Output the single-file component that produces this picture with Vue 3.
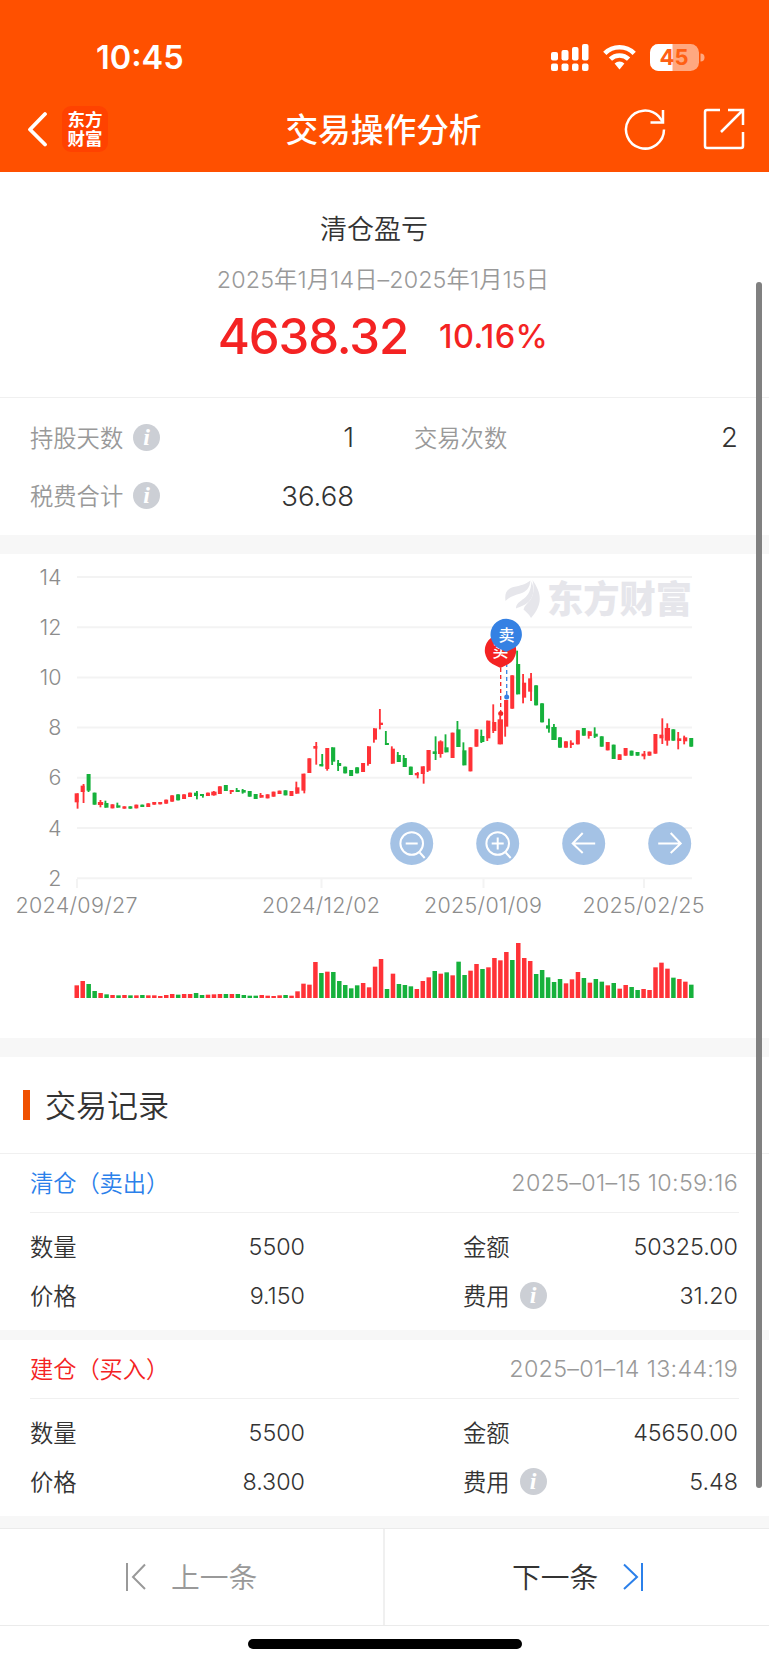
<template>
  <div class="page">
    <header class="header">
      <div class="status-bar">
        <span class="clock">10:45</span>
        <svg class="status-icons" width="156" height="30" viewBox="0 0 156 30">
          <g fill="#fff">
            <rect x="1" y="10" width="7" height="8.5" rx="2" />
            <rect x="11.5" y="8" width="7" height="10.5" rx="2" />
            <rect x="22" y="5" width="6.5" height="13.5" rx="2" />
            <rect x="32" y="2" width="6.5" height="16.5" rx="2" />
            <rect x="1" y="21.5" width="7" height="7.5" rx="2" />
            <rect x="11.5" y="21.5" width="7" height="7.5" rx="2" />
            <rect x="22" y="21.5" width="6.5" height="7.5" rx="2" />
            <rect x="32" y="21.5" width="6.5" height="7.5" rx="2" />
          </g>
          <g fill="none" stroke="#fff" stroke-width="4.6">
            <path d="M54.8 11.4a20.8 20.8 0 0 1 29.4 0" />
            <path d="M60.4 17.2a12.9 12.9 0 0 1 18.2 0" />
          </g>
          <path d="M64.6 21.4a7 7 0 0 1 9.8 0L69.5 27.5z" fill="#fff" />
          <rect x="100" y="2" width="49" height="27" rx="8.5" fill="#ffa880" />
          <path d="M122.500 2h-14a8.500 8.500 0 0 0-8.500 8.500v10a8.500 8.500 0 0 0 8.500 8.500h14z" fill="#fff" />
          <path d="M150.500 11.500a4 4 0 0 1 0 8z" fill="#ffa880" />
          <text class="battery-text" x="124" y="23" text-anchor="middle" textLength="29">45</text>
        </svg>
      </div>
      <div class="nav-bar">
        <div class="nav-left">
          <svg width="22" height="36" viewBox="0 0 22 36" fill="none" stroke="#fff" stroke-width="3.8" stroke-linecap="round" stroke-linejoin="round">
            <path d="M19 3L4 18.5l15 15" />
          </svg>
          <div class="app-logo"><span>东方</span><span>财富</span></div>
        </div>
        <h1 class="nav-title">交易操作分析</h1>
        <div class="nav-right">
          <svg width="42" height="42" viewBox="0 0 42 42" fill="none" stroke="#fff" stroke-width="2.5">
            <path d="M40 21.5A19 19 0 1 1 35 8.7L39 14" />
            <path d="M39 2v12.5H26.5" />
          </svg>
          <svg width="42" height="42" viewBox="0 0 42 42" fill="none" stroke="#fff" stroke-width="2.5">
            <path d="M17 2H4a2 2 0 0 0-2 2v34a2 2 0 0 0 2 2h34a2 2 0 0 0 2-2V24" />
            <path d="M25 2h15v15M40 2L18 24" />
          </svg>
        </div>
      </div>
    </header>

    <section class="summary">
      <div class="summary-title">清仓盈亏</div>
      <div class="summary-date">2025年1月14日–2025年1月15日</div>
      <div class="summary-values">
        <span class="profit">4638.32</span>
        <span class="rate">10.16%</span>
      </div>
    </section>

    <section class="stats">
      <div v-for="item in stats" :key="item.label" class="stat">
        <span class="stat-label">{{ item.label }}</span>
        <span v-if="item.info" class="info">i</span>
        <span class="stat-value">{{ item.value }}</span>
      </div>
    </section>

    <section class="chart">
      <svg width="769" height="484" viewBox="0 0 769 484">
        <!-- 座標軸 -->
        <g v-for="tick in yTicks" :key="tick.label">
          <path class="grid-line" :d="`M77 ${tick.y}H692`" />
          <text class="axis-text" x="61.5" :y="tick.y + 7.5" text-anchor="end">{{ tick.label }}</text>
        </g>
        <g v-for="tick in xTicks" :key="tick.label">
          <path class="grid-line" :d="`M${tick.x} 325v9`" />
          <text class="axis-text" :x="tick.x - 0.5" y="359" text-anchor="middle" :textLength="tick.w">{{ tick.label }}</text>
        </g>

        <!-- 浮水印 -->
        <g class="watermark">
          <path d="M505.500 47c-1-8 1-12 8-14 7-1.500 12-2.500 17-6.500-1 8-4 11-10 13-6 2-11 3-15 7.500z" />
          <path d="M516 54.500c0-5 4-7 8-10 5-4 7-9 7.500-17 3.500 8 2 15-2.500 20-4 4-9 5-13 7z" />
          <path d="M532.500 26c9 13 11 24-1.500 38-2-4-5-6-7.500-8.500 1-4 4-6 6.500-9 4-6 4.500-12 2.500-20.500z" />
          <text x="547" y="59" textLength="145" lengthAdjust="spacingAndGlyphs">东方财富</text>
        </g>

        <!-- K 線 -->
        <g transform="translate(0 126) scale(0.33333)">
          <g v-for="(c, i) in candles" :key="i" :class="c.color">
            <rect :x="c.x - c.w / 2" :y="c.top" :width="c.w" :height="c.bottom - c.top" />
            <rect :x="c.wickX" :y="c.high" width="5.5" :height="c.low - c.high" />
          </g>
        </g>

        <!-- 買賣點 -->
        <g>
          <path d="M500.7 114v43" stroke="#f42323" stroke-width="1.3" stroke-dasharray="4 3" />
          <path d="M506.7 102v39" stroke="#3581e3" stroke-width="1.3" stroke-dasharray="4 3" />
          <circle cx="500.7" cy="159.5" r="2.5" fill="#f42323" />
          <circle cx="506.7" cy="143" r="2.5" fill="#3581e3" />
          <path d="M500.5 114l-8-4a15.7 15.7 0 1 1 16 0z" fill="#f42323" />
          <text class="mark-text" x="500.5" y="103" text-anchor="middle">买</text>
          <path d="M506.2 98l-8-4a15.7 15.7 0 1 1 16 0z" fill="#3581e3" />
          <text class="mark-text" x="506.5" y="86.5" text-anchor="middle">卖</text>
        </g>

        <!-- 縮放與平移 -->
        <g class="control" transform="translate(411.7 289.5)">
          <circle class="control-bg" r="21.5" />
          <path d="M-6 0H6M8 9l5 5.5" />
          <circle cy="0" r="11.3" />
        </g>
        <g class="control" transform="translate(497.7 289.5)">
          <circle class="control-bg" r="21.5" />
          <path d="M-6 0H6M0-6V6M8 9l5 5.5" />
          <circle cy="0" r="11.3" />
        </g>
        <g class="control" transform="translate(583.7 289.5)">
          <circle class="control-bg" r="21.5" />
          <path d="M11.5 0H-11M-1-10.5L-11 0-1 9.5" />
        </g>
        <g class="control" transform="translate(669.7 289.5)">
          <circle class="control-bg" r="21.5" />
          <path d="M-11.5 0H11M1-10.5L11 0 1 9.5" />
        </g>

        <!-- 成交量 -->
        <g transform="translate(0 444) scale(0.33333)">
          <rect
            v-for="(v, i) in volumes"
            :key="i"
            :class="v > 0 ? 'up' : 'down'"
            :x="candleX(i) - 6.5"
            :y="-Math.abs(v)"
            width="13.5"
            :height="Math.abs(v)"
          />
        </g>
      </svg>
    </section>

    <section class="records">
      <h2 class="records-title"><span>交易记录</span></h2>
      <div v-for="r in records" :key="r.time" class="record">
        <div class="record-head">
          <span class="record-type" :class="r.type">{{ r.title }}</span>
          <span class="record-time">{{ r.time }}</span>
        </div>
        <div class="record-body">
          <span class="label">数量</span>
          <span class="num">{{ r.count }}</span>
          <span class="second"><span class="label">金额</span></span>
          <span class="num">{{ r.amount }}</span>
          <span class="label">价格</span>
          <span class="num">{{ r.price }}</span>
          <span class="second"><span class="label">费用</span><i class="info">i</i></span>
          <span class="num">{{ r.fee }}</span>
        </div>
      </div>
    </section>

    <footer class="footer">
      <button class="pager prev">
        <svg width="21" height="28" viewBox="0 0 21 28" fill="none" stroke="#999" stroke-width="2">
          <path d="M2 0v28M20 1.5L8 14l12 12" />
        </svg>
        <span>上一条</span>
      </button>
      <button class="pager next">
        <span>下一条</span>
        <svg width="21" height="28" viewBox="0 0 21 28" fill="none" stroke="#2b80ea" stroke-width="2">
          <path d="M19 0v28M1 1.5L14 14 1 26" />
        </svg>
      </button>
    </footer>
    <div class="home-area"><div class="home-indicator"></div></div>
    <div class="scrollbar"></div>
  </div>
</template>

<script setup>
const stats = [
  { label: "持股天数", value: "1", info: true },
  { label: "交易次数", value: "2", info: false },
  { label: "税费合计", value: "36.68", info: true },
];

const yTicks = [14, 12, 10, 8, 6, 4, 2].map((label, i) => ({
  label,
  y: 23 + i * 50.2,
}));

const xTicks = [
  { label: "2024/09/27", x: 77, w: 122 },
  { label: "2024/12/02", x: 321.5, w: 118 },
  { label: "2025/01/09", x: 483.5, w: 118 },
  { label: "2025/02/25", x: 644, w: 122 },
];

// 每根 K 線: 顏色 實體上 實體下 [最高 最低] [影線位置]
const candleData = `
r 340 367 340 386 r,r 317 336 312 369 r,g 282 332 282 336,g 338 374,r 366 375 360 382 c,
g 369 383 362 383 l,r 373 385,g 376 383 368 383 l,r 379 386,g 379 386,
r 374 385,g 374 381,r 370 381,r 366 374,r 366 373,
r 359 371,r 346 365,g 343 361,r 343 357,r 338 351,
g 338 348 333 358 r,g 342 348 342 353 r,r 338 348,r 335 346 333 347 c,r 319 342,
g 315 333,r 330 336 330 342 l,g 330 336 324 336 l,g 330 338 327 341 l,g 333 350,
g 342 357,r 345 353 339 353 l,r 343 355,r 335 350,r 332 342,
g 331 346,r 333 348,r 322 341 305 341 l,r 281 332 281 340 r,r 235 279,
r 198 206 186 254 r,g 252 259 222 259 r,r 204 267 204 272 c,g 202 245 202 255 l,g 249 258 240 273 l,
g 260 280,g 270 288,g 262 280,r 249 276,r 199 252 199 257 l,
r 145 179 145 188 l,r 128 135 87 148 l,g 189 195 153 195 l,r 206 251 199 251 l,g 225 246 216 246 l,
g 234 261 225 261 l,g 260 285,r 279 286 276 295 r,r 259 282 259 311 r,r 210 272 210 276 l,
g 214 222 169 240 r,r 184 222 181 233 c,g 202 217 163 217 l,r 158 234,g 148 201 123 201 l,
g 211 256 187 256 l,r 202 274,r 148 200,g 168 186 149 189 l,r 122 175 122 183 l,
r 126 153 73 159 l,r 118 193 108 193,r 60 140 60 170 l,r -14 86,g -48 43 -88 43 l,
r 8 53 -18 70 l,r -5 35 -21 63 r,g 16 76,g 70 127,g 136 146 116 158 r,
g 141 180 132 180 c,g 172 203,r 184 203,r 188 195 181 204 l,r 151 193,
g 144 167,r 154 168 154 176 l,g 161 170 142 174 l,g 169 200,r 186 211,
g 194 237,r 223 240,r 204 227,g 212 227,g 216 227,
r 221 229 213 238 r,r 215 227,r 162 221,r 164 175 115 192 r,r 144 182 130 197 c,
g 148 182,r 175 183 156 208 l,r 172 184 167 193 l,g 174 200`;

const candleX = (i) => 230 + i * 17.9;

const wickOffset = { l: -6, r: 0, c: -3 };

const candles = candleData.split(",").map((line, i) => {
  const [color, top, bottom, high = top, low = bottom, side = "c"] = line
    .trim()
    .split(" ");
  const wide = side === "c" && high !== top;
  return {
    color: color === "r" ? "up" : "down",
    x: candleX(i),
    w: wide ? 16 : 12,
    top: Number(top),
    bottom: Number(bottom),
    high: Number(high),
    low: Number(low),
    wickX: candleX(i) + wickOffset[side],
  };
});

// 正數為紅柱，負數為綠柱
const volumes = [
  38, 51, -42, -21, 15, -11, 9, -8, 9, -8, 8, -9, 8, 8, 6, 9, 12, -10, 12, 12,
  -15, -9, 10, 11, 12, -12, 12, -12, -9, -7, -7, 9, 7, 6, 8, -9, 7, 20, 43, 40,
  108, -75, 79, -78, -51, -39, -29, -38, 45, 32, 94, 117, -27, 73, -42, -39,
  -35, 27, 51, 62, -81, 73, -77, 68, -109, -69, 82, 102, -87, 92, 120, 113, 138,
  -114, 165, 120, 111, -72, -84, -62, -48, -57, 44, 56, 78, -60, 46, -57, -49,
  38, -45, 28, 39, -33, -24, 27, 24, 92, 106, 88, -61, 57, 49, -40,
];

const records = [
  {
    type: "sell",
    title: "清仓（卖出）",
    time: "2025–01–15 10:59:16",
    count: "5500",
    amount: "50325.00",
    price: "9.150",
    fee: "31.20",
  },
  {
    type: "buy",
    title: "建仓（买入）",
    time: "2025–01–14 13:44:19",
    count: "5500",
    amount: "45650.00",
    price: "8.300",
    fee: "5.48",
  },
];
</script>

<style>
body {
  background: #fff;
}
</style>

<style scoped>
.page {
  position: relative;
  width: 769px;
  height: 1665px;
  overflow: hidden;
  color: #333;
  font-family: Inter, "Noto Sans CJK SC", sans-serif;
  font-size: 23.3px;
  font-weight: 350;
}

.page * {
  box-sizing: border-box;
}

.page svg {
  display: block;
}

.header {
  height: 172px;
  background: #ff5000;
  color: #fff;
}

.status-bar {
  display: flex;
  justify-content: space-between;
  align-items: center;
  height: 86px;
  padding: 28px 53px 0 96px;
}

.clock {
  padding-top: 1px;
  font-size: 32.5px;
  font-weight: 600;
}

.status-icons {
  width: 156px;
  margin-right: 10px;
}

.battery-text {
  font-size: 22px;
  font-weight: 700;
  fill: #ff5f14;
}

.nav-bar {
  display: grid;
  grid-template-columns: 1fr auto 1fr;
  align-items: center;
  height: 86px;
  padding: 0 24px 0 26px;
}

.nav-left {
  display: flex;
  align-items: center;
  gap: 14px;
}

.app-logo {
  display: flex;
  flex-direction: column;
  align-items: center;
  justify-content: center;
  width: 46px;
  height: 46px;
  border-radius: 9px;
  background: #ff4200;
  font-size: 17.5px;
  font-weight: 700;
  line-height: 19px;
}

.nav-title {
  margin: 0;
  padding: 0 4px 4px 0;
  font-size: 32.7px;
  font-weight: 500;
}

.nav-right {
  display: flex;
  justify-content: flex-end;
  gap: 37px;
}

.summary {
  height: 226px;
  padding-top: 38px;
  border-bottom: 1px solid #f0f0f0;
  text-align: center;
}

.summary-title {
  height: 40px;
  padding-right: 21px;
  font-size: 27px;
  line-height: 39px;
}

.summary-date {
  height: 48px;
  padding-right: 3px;
  color: #999;
  letter-spacing: 0.1px;
  line-height: 60px;
}

.summary-values {
  display: flex;
  justify-content: center;
  align-items: center;
  gap: 31px;
  height: 76px;
  padding-right: 3px;
  color: #f42323;
  font-weight: 500;
}

.profit {
  font-size: 49px;
  letter-spacing: -1.1px;
}

.rate {
  font-size: 32.5px;
  letter-spacing: 0.4px;
}

.stats {
  display: grid;
  grid-template-columns: 324px 324px;
  grid-auto-rows: 58.5px;
  column-gap: 60px;
  height: 156px;
  padding: 10px 30px 0;
  border-bottom: 19px solid #f7f7f7;
}

.stat {
  display: flex;
  align-items: center;
}

.stat-label {
  padding-bottom: 1px;
  color: #999;
}

.stat-value {
  margin-left: auto;
  font-size: 27.5px;
}

.info {
  display: inline-flex;
  align-items: center;
  justify-content: center;
  width: 27px;
  height: 27px;
  margin-left: 10px;
  border-radius: 50%;
  background: #cccfd5;
  color: #fff;
  font: italic bold 24px "Liberation Serif", serif;
}

.chart {
  height: 503px;
  border-bottom: 19px solid #f7f7f7;
}

.grid-line {
  stroke: #f3f3f3;
  stroke-width: 2;
}

.axis-text {
  fill: #8c8c8c;
  font-size: 21.5px;
}

.watermark {
  fill: #e6e6eb;
  font-size: 37px;
  font-weight: 900;
}

.up {
  fill: #ff3237;
}

.down {
  fill: #16b13c;
}

.mark-text {
  fill: #fff;
  font-size: 16px;
  font-weight: 500;
}

.control {
  fill: none;
  stroke: #fff;
  stroke-width: 2;
}

.control-bg {
  fill: #9abbe2;
  fill-opacity: 0.9;
  stroke: none;
}

.records-title {
  display: flex;
  align-items: center;
  gap: 15px;
  height: 97px;
  margin: 0;
  padding-left: 23px;
  border-bottom: 1px solid #f0f0f0;
  font-size: 31px;
  font-weight: 350;
}

.records-title::before {
  content: "";
  width: 7px;
  height: 30px;
  background: #f05000;
}

.records-title span {
  padding-bottom: 4px;
}

.record {
  height: 186px;
  padding: 0 30px;
  border-bottom: 10px solid #f7f7f7;
}

.record:last-child {
  height: 188px;
  border-bottom-width: 12px;
}

.record-head {
  display: flex;
  justify-content: space-between;
  align-items: center;
  height: 59px;
  padding-bottom: 2px;
  border-bottom: 1px solid #f0f0f0;
}

.record-type {
  letter-spacing: -0.1px;
}

.record-time {
  padding-right: 1px;
  color: #999;
  letter-spacing: 0.3px;
}

.sell {
  color: #2b80ea;
}

.buy {
  color: #f42323;
}

.record-body {
  display: grid;
  grid-template-columns: 100px 175px 257px 176px;
  grid-auto-rows: 49px;
  align-items: center;
  padding-top: 9px;
}

.label {
  padding-bottom: 2px;
}

.second {
  display: flex;
  align-items: center;
  padding-left: 158px;
}

.num {
  text-align: right;
}

.footer {
  display: grid;
  grid-template-columns: 385px 384px;
  height: 98px;
  border-top: 1px solid #ebebeb;
  border-bottom: 1px solid #ebebeb;
}

.pager {
  display: flex;
  align-items: center;
  padding: 0;
  border: none;
  background: #fff;
  color: #333;
  font: inherit;
  font-size: 28.8px;
}

.pager span {
  padding-bottom: 3px;
}

.prev {
  gap: 25px;
  padding-left: 125px;
  border-right: 2px solid #f0f0f0;
  color: #999;
}

.next {
  gap: 25px;
  padding-left: 127px;
}

.home-area {
  display: flex;
  justify-content: center;
  padding: 13px 0 0;
}

.home-indicator {
  width: 274px;
  height: 10px;
  border-radius: 5px;
  background: #000;
}

/* 浮在頁面右側的捲軸 */
.scrollbar {
  position: absolute;
  top: 282px;
  right: 7px;
  width: 6px;
  height: 1206px;
  border-radius: 3px;
  background: #808080;
}
</style>
